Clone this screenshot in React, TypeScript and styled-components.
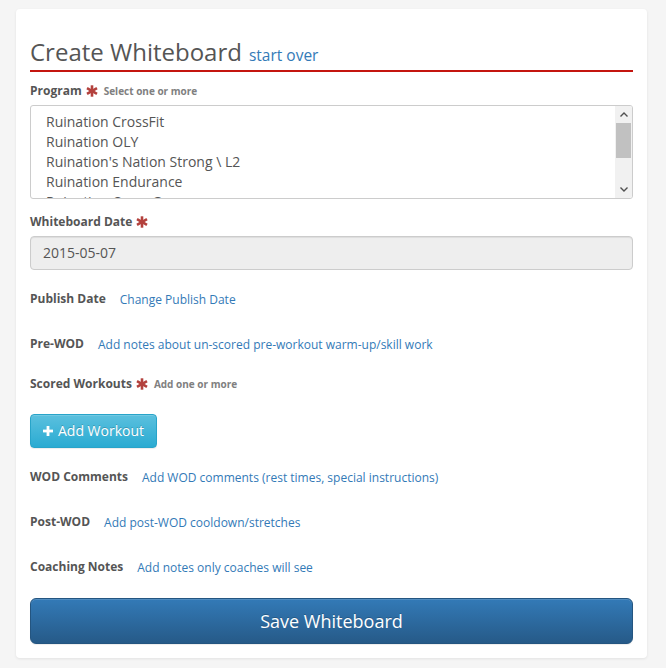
import React from "react";
import styled, { createGlobalStyle } from "styled-components";

const GlobalStyle = createGlobalStyle`
  html, body {
    margin: 0;
    padding: 0;
    background: #f5f5f5;
  }
  body {
    font-family: "Open Sans", "Liberation Sans", Arial, sans-serif;
    color: #555555;
  }
  * {
    box-sizing: border-box;
  }
`;

const programs = [
  "Ruination CrossFit",
  "Ruination OLY",
  "Ruination's Nation Strong \\ L2",
  "Ruination Endurance",
  "Ruination Open Gym",
];

const Asterisk = () => (
  <Star viewBox="0 0 12 12" width="12" height="12">
    <g stroke="#b3413d" strokeWidth="2.6" strokeLinecap="butt">
      <line x1="6" y1="0.3" x2="6" y2="11.7" />
      <line x1="1" y1="3.1" x2="11" y2="8.9" />
      <line x1="1" y1="8.9" x2="11" y2="3.1" />
    </g>
  </Star>
);

const PlusIcon = () => (
  <svg viewBox="0 0 10 10" width="10" height="10">
    <rect x="3.6" y="0" width="2.8" height="10" fill="#fff" />
    <rect x="0" y="3.6" width="10" height="2.8" fill="#fff" />
  </svg>
);

const App = () => {
  return (
    <>
      <GlobalStyle />
      <Page>
        <Card>
          <Heading>
            <Title>Create Whiteboard</Title>
            <StartOver href="#">start over</StartOver>
          </Heading>

          <LabelRow $top={10}>
            <Label>Program</Label>
            <Asterisk />
            <Hint>Select one or more</Hint>
          </LabelRow>
          <SelectBox>
            <Options>
              {programs.map((p) => (
                <Option key={p}>{p}</Option>
              ))}
            </Options>
            <Scrollbar>
              <Arrow viewBox="0 0 8 5" width="8" height="5">
                <path d="M0.5 4.5 L4 1 L7.5 4.5" fill="none" stroke="#505050" strokeWidth="1.4" />
              </Arrow>
              <Track>
                <Thumb />
              </Track>
              <Arrow viewBox="0 0 8 5" width="8" height="5">
                <path d="M0.5 0.5 L4 4 L7.5 0.5" fill="none" stroke="#505050" strokeWidth="1.4" />
              </Arrow>
            </Scrollbar>
          </SelectBox>

          <LabelRow $top={14}>
            <Label>Whiteboard Date</Label>
            <Asterisk />
          </LabelRow>
          <DateInput>2015-05-07</DateInput>

          <LinkRow $top={20}>
            <Label>Publish Date</Label>
            <ActionLink href="#">Change Publish Date</ActionLink>
          </LinkRow>

          <LinkRow $top={27}>
            <Label>Pre-WOD</Label>
            <ActionLink href="#">Add notes about un-scored pre-workout warm-up/skill work</ActionLink>
          </LinkRow>

          <LabelRow $top={22}>
            <Label>Scored Workouts</Label>
            <Asterisk />
            <Hint>Add one or more</Hint>
          </LabelRow>

          <ButtonRow>
            <InfoButton type="button">
              <PlusIcon />
              Add Workout
            </InfoButton>
          </ButtonRow>

          <LinkRow $top={20}>
            <Label>WOD Comments</Label>
            <ActionLink href="#">Add WOD comments (rest times, special instructions)</ActionLink>
          </LinkRow>

          <LinkRow $top={27}>
            <Label>Post-WOD</Label>
            <ActionLink href="#">Add post-WOD cooldown/stretches</ActionLink>
          </LinkRow>

          <LinkRow $top={27}>
            <Label>Coaching Notes</Label>
            <ActionLink href="#">Add notes only coaches will see</ActionLink>
          </LinkRow>

          <SaveButton type="button">Save Whiteboard</SaveButton>
        </Card>
      </Page>
    </>
  );
};

const Page = styled.div`
  padding: 9px 19px 10px 16px;
`;

const Card = styled.div`
  background: #ffffff;
  border-radius: 4px;
  box-shadow: 0 1px 3px rgba(0, 0, 0, 0.08);
  padding: 28px 14px 14px 14px;
  display: flex;
  flex-direction: column;
`;

const Heading = styled.div`
  display: flex;
  align-items: baseline;
  gap: 7px;
  height: 30px;
  padding-bottom: 3px;
  border-bottom: 2px solid #c4150f;
  box-sizing: content-box;
`;

const Title = styled.h1`
  margin: 0;
  font-size: 24px;
  font-weight: 400;
  line-height: 30px;
  color: #555555;
`;

const StartOver = styled.a`
  font-size: 15.5px;
  line-height: 30px;
  color: #337ab7;
  text-decoration: none;
`;

const LabelRow = styled.div<{ $top: number }>`
  margin-top: ${(p) => p.$top}px;
  height: 18px;
  display: flex;
  align-items: center;
  gap: 4px;
`;

const Label = styled.span`
  font-size: 12px;
  font-weight: 700;
  line-height: 18px;
  color: #555555;
  white-space: nowrap;
`;

const Star = styled.svg`
  display: block;
  flex: none;
`;

const Hint = styled.span`
  margin-left: 2px;
  font-size: 10px;
  font-weight: 700;
  line-height: 18px;
  color: #808080;
`;

const SelectBox = styled.div`
  margin-top: 5px;
  height: 94px;
  border: 1px solid #cccccc;
  border-radius: 3px;
  display: flex;
  overflow: hidden;
`;

const Options = styled.div`
  flex: 1;
  padding: 6px 15px 0 15px;
  overflow: hidden;
`;

const Option = styled.div`
  font-size: 14px;
  line-height: 20px;
  color: #555555;
  white-space: nowrap;
`;

const Scrollbar = styled.div`
  width: 17px;
  flex: none;
  background: #f1f1f1;
  display: flex;
  flex-direction: column;
  align-items: center;
`;

const Arrow = styled.svg`
  display: block;
  flex: none;
  margin: 6px 0;
`;

const Track = styled.div`
  flex: 1;
  width: 100%;
`;

const Thumb = styled.div`
  height: 35px;
  margin: 0 1px;
  background: #c1c1c1;
`;

const DateInput = styled.div`
  margin-top: 5px;
  height: 34px;
  padding: 6px 12px;
  background: #eeeeee;
  border: 1px solid #cccccc;
  border-radius: 4px;
  box-shadow: inset 0 1px 1px rgba(0, 0, 0, 0.075);
  font-size: 14px;
  line-height: 20px;
  color: #555555;
`;

const LinkRow = styled.div<{ $top: number }>`
  margin-top: ${(p) => p.$top}px;
  height: 18px;
  display: flex;
  align-items: flex-start;
  gap: 14px;
`;

const ActionLink = styled.a`
  padding-top: 1px;
  font-size: 12px;
  line-height: 18px;
  color: #337ab7;
  text-decoration: none;
  white-space: nowrap;
`;

const ButtonRow = styled.div`
  margin-top: 21px;
  display: flex;
`;

const InfoButton = styled.button`
  display: inline-flex;
  align-items: center;
  gap: 5px;
  height: 34px;
  padding: 6px 12px;
  font-family: "Open Sans", "Liberation Sans", Arial, sans-serif;
  font-size: 14px;
  line-height: 20px;
  color: #ffffff;
  text-shadow: 0 -1px 0 rgba(0, 0, 0, 0.2);
  background-image: linear-gradient(to bottom, #5bc0de 0%, #2aabd2 100%);
  border: 1px solid #28a4c9;
  border-radius: 4px;
  box-shadow: inset 0 1px 0 rgba(255, 255, 255, 0.15), 0 1px 1px rgba(0, 0, 0, 0.075);
  cursor: pointer;
`;

const SaveButton = styled.button`
  margin-top: 22px;
  height: 46px;
  width: 100%;
  padding: 10px 16px;
  font-family: "Open Sans", "Liberation Sans", Arial, sans-serif;
  font-size: 18px;
  line-height: 24px;
  color: #ffffff;
  text-shadow: 0 -1px 0 rgba(0, 0, 0, 0.2);
  background-image: linear-gradient(to bottom, #337ab7 0%, #265a88 100%);
  border: 1px solid #245580;
  border-radius: 6px;
  box-shadow: inset 0 1px 0 rgba(255, 255, 255, 0.15), 0 1px 1px rgba(0, 0, 0, 0.075);
  cursor: pointer;
`;

export default App;
